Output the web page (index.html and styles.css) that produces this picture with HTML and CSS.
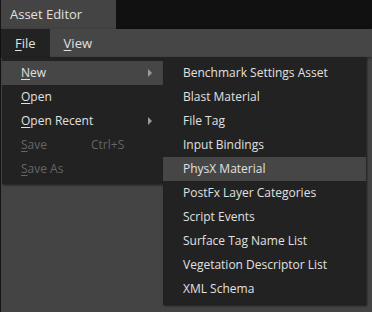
FILE: index.html
```html
<!DOCTYPE html>
<html lang="en">
<head>
    <meta charset="UTF-8">
    <meta name="viewport" content="width=device-width, initial-scale=1.0">
    <title>Asset Editor</title>
    <link rel="stylesheet" href="styles.css">
</head>
<body>
    <div class="window">
        <div class="titlebar">
            <div class="tab">Asset Editor</div>
        </div>
        <div class="menubar">
            <div class="menubar-item open"><u>F</u>ile</div>
            <div class="menubar-item"><u>V</u>iew</div>
        </div>
        <div class="workspace"></div>

        <div class="menu file-menu">
            <div class="menu-row active"><span class="label"><u>N</u>ew</span><span class="arrow"></span></div>
            <div class="menu-row"><span class="label"><u>O</u>pen</span></div>
            <div class="menu-row"><span class="label"><u>O</u>pen Recent</span><span class="arrow"></span></div>
            <div class="menu-row disabled"><span class="label"><u>S</u>ave</span><span class="shortcut">Ctrl+S</span></div>
            <div class="menu-row disabled"><span class="label"><u>S</u>ave As</span></div>
        </div>

        <div class="menu sub-menu">
            <div class="menu-row">Benchmark Settings Asset</div>
            <div class="menu-row">Blast Material</div>
            <div class="menu-row">File Tag</div>
            <div class="menu-row">Input Bindings</div>
            <div class="menu-row active">PhysX Material</div>
            <div class="menu-row">PostFx Layer Categories</div>
            <div class="menu-row">Script Events</div>
            <div class="menu-row">Surface Tag Name List</div>
            <div class="menu-row">Vegetation Descriptor List</div>
            <div class="menu-row">XML Schema</div>
        </div>
    </div>
</body>
</html>
```

FILE: styles.css
```css
html, body {
    margin: 0;
    height: 100%;
}
body {
    font-family: 'Open Sans', 'Noto Sans', sans-serif;
    font-size: 12px;
    color: #e0e0e0;
    background-color: #444444;
}
u {
    text-underline-offset: 2px;
}
.window {
    position: relative;
    height: 100%;
    display: flex;
    flex-direction: column;
    border-left: 1px solid #151515;
}
.titlebar {
    height: 29px;
    background-color: #111111;
    display: flex;
}
.tab {
    width: 106px;
    padding-left: 9px;
    line-height: 29px;
    font-size: 13px;
    background-color: #444444;
}
.menubar {
    height: 28px;
    display: flex;
    background-color: #464646;
    box-shadow: 0 1px 3px rgba(0, 0, 0, 0.5);
    position: relative;
}
.menubar-item {
    padding: 0 14px;
    line-height: 28px;
    font-size: 13px;
}
.menubar-item.open {
    background-color: #222222;
}
.workspace {
    flex: 1;
    background-color: #444444;
}

/* popup menus */
.menu {
    position: absolute;
    top: 57px;
    background-color: #222222;
    padding: 4px 0 3px;
    box-shadow: 1px 1px 2px rgba(0, 0, 0, 0.6);
}
.file-menu {
    left: 1px;
    width: 161px;
}
.sub-menu {
    left: 162px;
    width: 203px;
    padding-bottom: 4px;
}
.menu-row {
    height: 24px;
    line-height: 24px;
    display: flex;
    align-items: center;
    font-size: 12px;
}
.file-menu .menu-row {
    padding: 0 11px 0 19px;
}
.sub-menu .menu-row {
    padding-left: 20px;
}
.menu-row.active {
    background-color: #464646;
}
.menu-row.disabled {
    color: #656565;
}
.label {
    width: 70px;
    white-space: nowrap;
}
.shortcut {
    flex: 1;
}
.arrow {
    margin-left: auto;
    width: 0;
    height: 0;
    border-top: 4px solid transparent;
    border-bottom: 4px solid transparent;
    border-left: 4px solid #9a9a9a;
}
```
